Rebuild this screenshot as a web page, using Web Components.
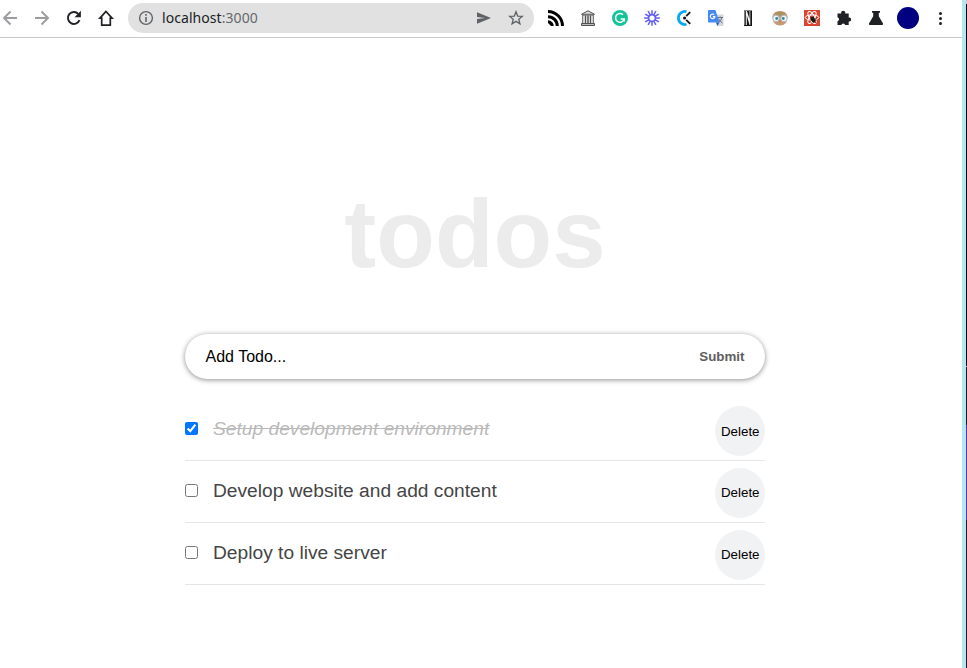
<!DOCTYPE html>
<html lang="en">
<head>
<meta charset="utf-8">
<title>todos</title>
<style>
html,body{margin:0;height:100%;overflow:hidden;background:#fff}
body{font-family:"Liberation Sans",Arial,sans-serif}
</style>
</head>
<body>
<desktop-view>
  <browser-bar slot="bar" host="localhost" port=":3000"></browser-bar>
  <todo-app>
    <todo-header>todos</todo-header>
    <todo-form></todo-form>
    <todo-item done>Setup development environment</todo-item>
    <todo-item>Develop website and add content</todo-item>
    <todo-item>Deploy to live server</todo-item>
  </todo-app>
</desktop-view>
<script>
function define(name, html, setup) {
  customElements.define(name, class extends HTMLElement {
    constructor() {
      super();
      this.attachShadow({mode: 'open'}).innerHTML = html;
    }
    connectedCallback() { if (setup) setup(this, this.shadowRoot); }
  });
}

define('desktop-view', `
<style>
:host{display:grid;grid-template-columns:962px 4px 1px;height:668px;width:967px}
.edge{background:#b6e7f0}
.behind{background:linear-gradient(#c9c6cd 0 4px,#03060d 4px 366px,#b9c3cc 366px 367px,#210f1e 367px 425px,#5b31a5 425px 520px,#2a1222 520px)}
slot[name=bar]{display:block}
</style>
<main><slot name="bar"></slot><slot></slot></main><div class="edge"></div><div class="behind"></div>`);

const petals = Array.from({length: 12}, (_, i) => `<path d="M8 .2v4.800" transform="rotate(${i * 30} 8 8)"/>`).join('');

const icons = {
  back: '<svg viewBox="0 0 16 16"><path d="M15 8H2M8.500 1.500 2 8l6.500 6.500" fill="none" stroke="#9b9c9e" stroke-width="1.900"/></svg>',
  forward: '<svg viewBox="0 0 16 16"><path d="M1 8h13M7.500 1.500 14 8l-6.500 6.500" fill="none" stroke="#9b9c9e" stroke-width="1.900"/></svg>',
  reload: '<svg viewBox="0 0 16 16"><path d="M13.500 10.200A6 6 0 1 1 12.300 3.800" fill="none" stroke="#202124" stroke-width="1.900"/><path d="M14.900.8v6.400H8.500z" fill="#202124"/></svg>',
  home: '<svg viewBox="0 0 16 16"><path d="M8 1.400 1.900 8.200h1.800v6.900h8.600V8.200h1.800z" fill="none" stroke="#202124" stroke-width="1.700"/></svg>',
  rss: '<svg viewBox="0 0 16 16"><g fill="none" stroke="#000" stroke-width="3"><path d="M0 1.500A14.500 14.500 0 0 1 14.500 16M0 6.700A9.300 9.300 0 0 1 9.300 16"/></g><path d="M0 10.300A5.700 5.700 0 0 1 5.700 16H3L0 13z"/></svg>',
  archive: '<svg viewBox="0 0 16 16" fill="none" stroke="#505050"><path d="M1.500 4.300 8 .8l6.500 3.500z" fill="#ddd"/><path d="M2 5.300h12" stroke="#888"/><path d="M2.700 5v8.500M13.300 5v8.500" stroke-width="1.300" stroke="#777"/><path d="M5.500 5.500v8M8 5.500v8M10.500 5.500v8" stroke-width="1.500"/><path d="M1.500 13.500h13v2h-13z" fill="#bbb"/></svg>',
  grammar: '<svg viewBox="0 0 16 16"><circle cx="8" cy="8" r="8" fill="#15c39a"/><path d="M11 4.700A4.400 4.400 0 1 0 12.200 9H8.700M12.200 8.500v3" fill="none" stroke="#fff" stroke-width="1.500"/></svg>',
  loom: `<svg viewBox="0 0 16 16" stroke="#625df5" stroke-width="1.500">${petals}<circle cx="8" cy="8" r="3.300" fill="none" stroke-width="1.400"/></svg>`,
  clock: '<svg viewBox="0 0 16 16"><path d="M10.500 1.700A6.500 6.500 0 1 0 10.500 14.300" fill="none" stroke="#03a9f4" stroke-width="2.700"/><path d="M10.200 6.200 14.200 2.200M10.200 9.800l4 4.100" stroke="#161616" stroke-width="1.800"/><circle cx="8.600" cy="8" r="1.600" fill="#161616"/></svg>',
  translate: '<svg viewBox="0 0 16 16"><path d="M7 4.500h8.500V16H9z" fill="#d5d7db"/><path d="M0 .8Q0 0 .8 0h6.700l4 12.500H.8Q0 12.500 0 11.700z" fill="#4688f1"/><path d="M8 12.500h3.500L9.300 16z" fill="#2d5cbe"/><path d="M6.200 4.700a2.300 2.300 0 1 0 .7 1.900H4.800" fill="none" stroke="#fff" stroke-width="1.100"/><path d="M10 7.500h5M12.200 6.500v1M14 7.500q-.8 3-3.200 4.500M10.500 8.500q1.300 3 4 4.500" fill="none" stroke="#65778c" stroke-width="1"/></svg>',
  notes: '<svg viewBox="0 0 16 16"><path d="M4 .5h8V16H4z" fill="#151515"/><path d="M5.800 1h1.100l2.600 8V1h.8v14h-.8L6.800 5.500V15h-1z" fill="#f4f4f4"/><path d="M4 .5h1v14.500H4z" fill="#777"/></svg>',
  owl: '<svg viewBox="0 0 16 16"><path d="M.3 7Q1 1 8 1t7.700 6L14.500 12q-2.500 3.500-6.500 3.500T1.500 12z" fill="#c79a76"/><path d="M2.500 3.500Q8-.5 13.500 3.500L8 6z" fill="#a99162"/><g fill="#eef6f8" stroke="#a9bcc0"><circle cx="4" cy="8.500" r="3.200"/><circle cx="12" cy="8.500" r="3.200"/></g><circle cx="4.700" cy="8.500" r="1.400" fill="#338899"/><circle cx="11.300" cy="8.500" r="1.400" fill="#338899"/><path d="M6.600 10.500h2.800L8 13z" fill="#eb7044"/></svg>',
  react: '<svg viewBox="0 0 16 16"><path fill="#d9452f" d="M0 0h16v16H0z"/><g fill="none" stroke="#fff" stroke-width="1"><ellipse cx="8" cy="7.500" rx="6.700" ry="2.600"/><ellipse cx="8" cy="7.500" rx="6.700" ry="2.600" transform="rotate(60 8 7.500)"/><ellipse cx="8" cy="7.500" rx="6.700" ry="2.600" transform="rotate(-60 8 7.500)"/></g><ellipse cx="9" cy="9.500" rx="2" ry="3" fill="#201914" transform="rotate(-35 9 9.500)"/><path d="m6.500 6.500 5.500 6.500M6 10h6.500M9.500 6.500v6M12.500 8l-5 4.500" stroke="#201914" stroke-width=".8"/></svg>',
  puzzle: '<svg viewBox="0 0 16 16"><path d="M1.500 3.500h3.700a2.100 2.100 0 1 1 4 0h3.500v4a2 2 0 1 1 0 3.900V15H9.200a2 2 0 0 0-3.900 0H1.500v-3.800a2 2 0 0 0 0-3.900z" fill="#202124"/></svg>',
  flask: '<svg viewBox="0 0 16 16"><path d="M4 1h8v1.800h-1.200v3.400l4.200 7.300q.5 1.300-.8 1.500H1.800Q.5 14.800 1 13.500l4.200-7.300V2.800H4z" fill="#202124"/></svg>',
  menu: '<svg viewBox="0 0 16 16" fill="#202124"><circle cx="8.500" cy="3.500" r="1.500"/><circle cx="8.500" cy="8.500" r="1.500"/><circle cx="8.500" cy="13.500" r="1.500"/></svg>',
  info: '<svg viewBox="0 0 16 16"><circle cx="8" cy="8" r="6.400" fill="none" stroke="#5f6368" stroke-width="1.400"/><path d="M8 4v1.700M8 7v5" stroke="#5f6368" stroke-width="1.600"/></svg>',
  send: '<svg viewBox="0 0 16 16"><path d="M1 2.200 15 8 1 13.800V9l8-1-8-1z" fill="#5f6368"/></svg>',
  star: '<svg viewBox="0 0 16 16"><path d="m8 1.800 1.700 4.300 4.600.3-3.500 2.900 1.100 4.500L8 11.400l-3.900 2.400 1.100-4.500-3.500-2.900 4.600-.3z" fill="none" stroke="#5f6368" stroke-width="1.350"/></svg>'
};

define('bar-icon', '', (el, root) => {
  root.innerHTML = '<style>:host{display:block;width:16px;height:16px;flex:none}svg{display:block;width:16px;height:16px}</style>' + icons[el.getAttribute('name')];
});

define('browser-bar', `
<style>
:host{box-sizing:border-box;height:38px;display:flex;align-items:flex-start;border-bottom:1px solid #c9c9c9;background:#fff}
nav{display:flex;gap:16px;padding:10px 0 0 2px;width:126px;box-sizing:border-box}
.address{box-sizing:border-box;margin:3px 0 0 2px;width:406px;height:30px;border-radius:15px;background:#e1e1e1;padding:0 10px;display:flex;align-items:center}
.url{font:14px/20px "Noto Sans","Open Sans",sans-serif;letter-spacing:.06px;color:#202124;margin-left:8px;flex:1}
.url span{color:#65696e}
.address bar-icon:last-child{margin-left:16px}
.tools{display:flex;gap:16px;padding:10px 0 0 14px;align-items:center}
.avatar{width:22px;height:22px;border-radius:50%;background:#000080;margin:-3px}
</style>
<nav><bar-icon name="back"></bar-icon><bar-icon name="forward"></bar-icon><bar-icon name="reload"></bar-icon><bar-icon name="home"></bar-icon></nav>
<div class="address"><bar-icon name="info"></bar-icon><div class="url"></div><bar-icon name="send"></bar-icon><bar-icon name="star"></bar-icon></div>
<div class="tools">${['rss','archive','grammar','loom','clock','translate','notes','owl','react','puzzle','flask'].map(n => `<bar-icon name="${n}"></bar-icon>`).join('')}<div class="avatar"></div><bar-icon name="menu"></bar-icon></div>`,
  (el, root) => {
    const url = root.querySelector('.url'), port = document.createElement('span');
    port.textContent = el.getAttribute('port');
    url.append(el.getAttribute('host'), port);
  });

define('todo-app', `<style>:host{display:block;width:580px;padding:141px 0 0 185px}</style><slot></slot>`);

define('todo-header', `
<style>:host{display:block}h1{margin:0 0 45px;font-size:96px;line-height:110px;font-weight:700;color:#ececec;text-align:center}</style>
<h1><slot></slot></h1>`);

define('todo-form', `
<style>
:host{display:block;margin-bottom:20px}
form{box-sizing:border-box;height:45px;display:flex;align-items:center;justify-content:space-between;border-radius:23px;padding:0 20.500px;box-shadow:0 1px 6px rgba(0,0,0,.24),0 1px 4px rgba(0,0,0,.24)}
label{font-size:16px;color:#000}
button{border:0;padding:0;background:none;font:bold 13.333px "Liberation Sans",Arial,sans-serif;color:#5e5e5e}
</style>
<form><label>Add Todo...</label><button type="button">Submit</button></form>`);

define('todo-item', `
<style>
:host{box-sizing:border-box;height:62px;display:flex;align-items:flex-start;border-bottom:1px solid #e6e6e6;color:#454545}
input{margin:23px 15px 0 0;width:13px;height:13px}
.label{flex:1;font-size:19.200px;line-height:22px;padding-top:19px}
:host([done]) .label{font-style:italic;color:#bababa;text-decoration:line-through}
button{width:50px;height:50px;border:0;padding:0 0 1px .5px;margin-top:7px;border-radius:50%;background:#f1f2f4;font:13.333px "Liberation Sans",Arial,sans-serif;color:#000}
:host([done]) button{padding-bottom:0}
</style>
<input type="checkbox"><span class="label"><slot></slot></span><button type="button">Delete</button>`,
  (el, root) => { root.querySelector('input').checked = el.hasAttribute('done'); });
</script>
</body>
</html>
